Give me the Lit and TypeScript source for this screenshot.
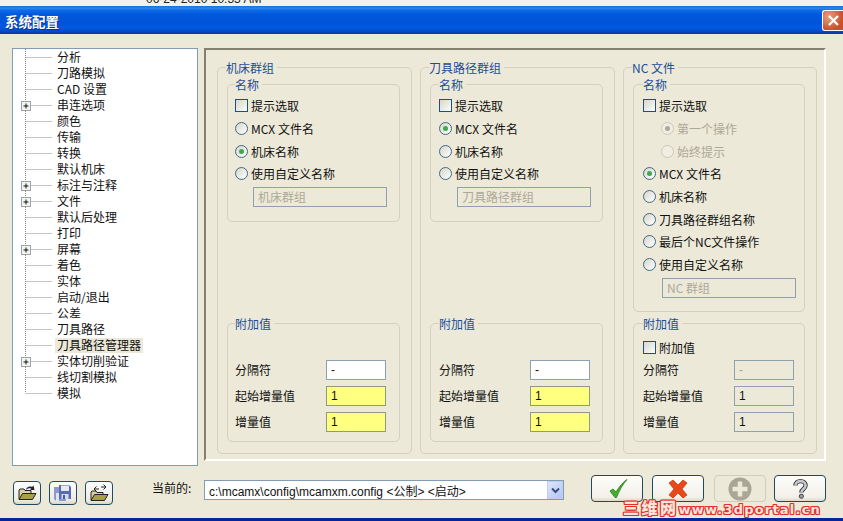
import { LitElement, html, css, svg } from "lit";
import { customElement } from "lit/decorators.js";

const tree: [string, boolean?][] = [
  ["分析"], ["刀路模拟"], ["CAD 设置"], ["串连选项", true], ["颜色"], ["传输"], ["转换"], ["默认机床"],
  ["标注与注释", true], ["文件", true], ["默认后处理"], ["打印"], ["屏幕", true], ["着色"], ["实体"],
  ["启动/退出"], ["公差"], ["刀具路径"], ["刀具路径管理器"], ["实体切削验证", true], ["线切割模拟"], ["模拟"],
];

const comboText = "c:\\mcamx\\config\\mcamxm.config <公制> <启动>";

@customElement("app-root")
export class AppRoot extends LitElement {
  static styles = css`
    :host { display: flex; flex-direction: column; position: relative; width: 843px; height: 521px; overflow: hidden; background: #ece9d8;
      font-family: "Noto Sans CJK SC", "Liberation Sans", sans-serif; font-size: 12px; color: #111; }
    .strip { height: 6px; flex: none; overflow: hidden; background: #f4f2e8; padding-left: 146px; font-family: "Liberation Sans", sans-serif; }
    .strip span { display: block; margin-top: -8px; line-height: 14px; color: #222; }
    .title { height: 28px; flex: none; display: flex; align-items: center; justify-content: space-between; padding: 1px 0 0 5px; box-sizing: border-box;
      background: linear-gradient(#1a6ee0 0, #2a84ee 8%, #0f6ae8 16%, #0058dc 30%, #0054d8 60%, #0058e4 76%, #0050cc 88%, #0a3fa8 96%, #0c3a98 100%);
      color: #fff; font-size: 13.5px; font-weight: 700; text-shadow: 1px 1px 0 #0a2f80; }
    .close { width: 21px; height: 21px; box-sizing: border-box; border: 1px solid #fff; border-right: 0; border-radius: 3px 0 0 3px; display: flex; align-items: center; justify-content: center;
      background: radial-gradient(circle at 30% 30%, #e8a080, #c8502c 70%); }
    .main { flex: none; height: 432px; box-sizing: border-box; display: flex; align-items: flex-start; padding: 14px 0 0 12px; }
    .tree { width: 186px; height: 418px; box-sizing: border-box; border: 1px solid #7f9db9; background: #fff; flex: none; }
    .node { display: flex; height: 16px; align-items: flex-start; }
    .node svg { flex: none; display: block; }
    .node span { margin-top: 1px; padding: 0 2px; line-height: 13px; height: 15px; }
    .node .sel { background: #ece9d8; }
    .panel { margin-left: 6px; width: 622px; height: 413px; box-sizing: border-box; border: 2px solid; border-color: #83806f #fff #fff #83806f;
      display: grid; grid-template-columns: 195px 195px 194px; column-gap: 8px; padding: 17px 0 5px 11px; }
    .group { border: 1px solid #d3d0bd; border-radius: 5px; padding: 0 11px 0 9px; display: flex; flex-direction: column; min-height: 0; }
    .legend { height: 16px; margin-top: -8px; line-height: 15px; background: #ece9d8; width: fit-content; padding-right: 3px; color: #1a4e98; flex: none; }
    .group > .legend { margin-left: -1px; }
    .inner { margin-top: 8px; border: 1px solid #d3d0bd; border-radius: 5px; padding: 0 0 0 7px; box-sizing: border-box; height: 138px; }
    .tall { height: 228px; }
    .g2 .inner, .g2 .extra { padding-left: 8px; }
    .g3 .inner, .g3 .extra { padding-left: 9px; }
    .rows { padding-top: 1.67px; }
    .row { height: 22.67px; display: flex; align-items: center; gap: 3px; white-space: nowrap; }
    .row.sub { padding-left: 18px; }
    .off { color: #aca899; }
    .check { width: 13px; height: 13px; box-sizing: border-box; border: 1px solid #1c5180; background: linear-gradient(135deg, #d8d8d0, #fbfbf9); flex: none; }
    .radio { width: 13px; height: 13px; box-sizing: border-box; border: 1px solid #3f6a8a; border-radius: 50%; background: linear-gradient(135deg, #d6d5cb, #fff); flex: none; display: flex; align-items: center; justify-content: center; }
    .radio.dim { border-color: #cac8bb; background: #f0eee2; }
    .radio i { width: 5px; height: 5px; border-radius: 50%; background: #3faa4a; }
    .radio.dim i { background: #aca899; }
    .box { box-sizing: border-box; height: 20px; border: 1px solid #8fa0ae; background: #fff; display: flex; align-items: center; padding-left: 4px; font-family: "Liberation Sans", sans-serif; }
    .box.cjk { font-family: "Noto Sans CJK SC", sans-serif; }
    .box.name { width: 134px; margin: 1.67px 0 0 18px; background: #ece9d8; color: #aca899; }
    .g3 .box.name { margin: 2px 0 0 19px; }
    .box.yellow { background: #ffff80; border-color: #8f9a80; }
    .box.flat { background: #ece9d8; }
    .box.faint { background: #ece9d8; color: #aca899; }
    .extra { margin-top: auto; margin-bottom: 11px; height: 119px; box-sizing: border-box; border: 1px solid #d3d0bd; border-radius: 5px; padding: 0 0 0 7px; display: flex; flex-direction: column; flex: none; }
    .slot { height: 22px; margin-top: 4px; display: flex; align-items: center; gap: 3px; flex: none; }
    .fields { margin-top: 2px; display: grid; grid-template-columns: 91px 60px; grid-auto-rows: 20px; row-gap: 6px; align-items: center; }
    .fields span { margin-top: -2px; }
    .foot { flex: 1; display: flex; align-items: flex-start; padding-top: 9px; }
    .mini { width: 28px; height: 24px; box-sizing: border-box; margin: 6px 8px 0 0; border: 1px solid #1f4a62; border-radius: 4px; background: linear-gradient(#fdfdfb, #ece9e0 85%, #d8d4c6); display: flex; align-items: center; justify-content: center; flex: none; }
    .foot .mini:first-child { margin-left: 13px; }
    .cur { margin: 4px 12px 0 31px; line-height: 18px; width: 40px; flex: none; white-space: nowrap; }
    .combo { width: 360px; height: 20px; box-sizing: border-box; margin-top: 5px; border: 1px solid #7f9db9; background: #fff; display: flex; align-items: center; justify-content: space-between; padding-left: 4px; font-family: "Liberation Sans", "Noto Sans CJK SC", sans-serif; flex: none; white-space: pre; }
    .arrow { width: 16px; height: 18px; box-sizing: border-box; border: 1px solid #c0cfe8; background: linear-gradient(135deg, #dde6fb, #b3c5f3); display: flex; align-items: center; justify-content: center; }
    .acts { display: flex; margin-left: 27px; }
    .btn { width: 52px; height: 27px; box-sizing: border-box; margin-right: 9px; border: 1px solid #1f4a62; border-radius: 4px; background: linear-gradient(#fdfdfb, #f2f0e8 85%, #dcd8ca); display: flex; align-items: center; justify-content: center; flex: none; }
    .btn.dis { border-color: #d0cdbb; background: #ece9d8; margin-left: 1px; margin-right: 8px; }
    .base { height: 3px; background: #06259a; flex: none; }
    .mark { position: absolute; left: 623px; top: 499px; font-family: "DejaVu Sans", "Noto Sans CJK SC", sans-serif; font-size: 13px; letter-spacing: 1.2px; font-weight: 700; line-height: 16px; color: #fde4dc; white-space: nowrap;
      text-shadow: 1px 0 0 #e0302a, -1px 0 0 #e0302a, 0 1px 0 #e0302a, 0 -1px 0 #e0302a, 1px 1px 0 #e0302a, -1px -1px 0 #e0302a, 1px -1px 0 #e0302a, -1px 1px 0 #e0302a; }
    .mark b { font-size: 16px; letter-spacing: 2.500px; font-family: "Noto Sans CJK SC", sans-serif; }
  `;

  private conn(plus: boolean, last: boolean) {
    return html`<svg width="42" height="16" viewBox="0 0 42 16">
      <path d="M12.5 ${last ? "0V8" : "0V16"}M12.5 8.5H39" stroke="#8a8a8a" stroke-dasharray="1 1" fill="none"/>
      ${plus ? svg`<rect x="8.5" y="4.5" width="9" height="9" fill="#f4f4ee" stroke="#98a4b0"/><path d="M10.5 9H15.5M13 6.5V11.5" stroke="#111"/>` : ""}
    </svg>`;
  }

  private radio(label: string, on = false, dim = false, sub = false) {
    return html`<div class="row ${sub ? "sub" : ""} ${dim ? "off" : ""}"><span class="radio ${dim ? "dim" : ""}">${on ? html`<i></i>` : ""}</span>${label}</div>`;
  }

  private extra(third: boolean) {
    return html`<div class="extra">
      <div class="legend">附加值</div>
      <div class="slot">${third ? html`<span class="check"></span>附加值` : ""}</div>
      <div class="fields">
        <span>分隔符</span><div class="box ${third ? "faint" : ""}">-</div>
        <span>起始增量值</span><div class="box ${third ? "flat" : "yellow"}">1</div>
        <span>增量值</span><div class="box ${third ? "flat" : "yellow"}">1</div>
      </div>
    </div>`;
  }

  private simple(cls: string, title: string, on: number, name: string) {
    return html`<div class="group ${cls}">
      <div class="legend">${title}</div>
      <div class="inner">
        <div class="legend">名称</div>
        <div class="rows">
          <div class="row"><span class="check"></span>提示选取</div>
          ${this.radio("MCX 文件名", on === 0)}
          ${this.radio("机床名称", on === 1)}
          ${this.radio("使用自定义名称")}
        </div>
        <div class="box cjk name">${name}</div>
      </div>
      ${this.extra(false)}
    </div>`;
  }

  private icons = {
    open: svg`<path d="M2 15V6l1-1h4l1 1.500h6V15z" fill="#d8d0a0" stroke="#222"/><path d="M2 15.500l3.500-6H19l-3.500 6z" fill="#a8a048" stroke="#222"/><path d="M9 5.500c1-3 4-3.500 6-2.500l1.500-1.500 1 4.500h-4.500l1.300-1.300c-1.500-.6-3.300-.5-4.800.8z" fill="#222"/>`,
    save: svg`<path d="M1 3h10l2 2v12H3l-2-2z" fill="#8c9ad0"/><path d="M6 1h10l2 2v12H6z" fill="#5a6cb0"/><rect x="8" y="1.500" width="8" height="5.500" fill="#e6e9f4"/><rect x="8.500" y="10" width="7" height="5" fill="#d5daea"/><rect x="10" y="11" width="2" height="4" fill="#4a5c98"/><path d="M3 9h3v8H3z" fill="#dfe3f0"/>`,
    merge: svg`<path d="M2 16V8l1-1h4l1 1.500h6V16z" fill="#d8d0a0" stroke="#222"/><path d="M2 16.500l3.500-6H19l-3.500 6z" fill="#a8a048" stroke="#222"/><path d="M5 5h5M7.500 2.500L5 5l2.500 2.500M12 3h5M14.500 .5L17 3l-2.500 2.500" fill="none" stroke="#222"/>`,
  };

  render() {
    return html`
      <div class="strip"><span>06-24-2010 10:35 AM</span></div>
      <div class="title">
        <span>系统配置</span>
        <div class="close"><svg width="13" height="13" viewBox="0 0 13 13"><path d="M2 2L11 11M11 2L2 11" stroke="#fff" stroke-width="2.200"/></svg></div>
      </div>
      <div class="main">
        <div class="tree">
          ${tree.map(([t, plus], i) => html`<div class="node">
            ${this.conn(!!plus, i === tree.length - 1)}
            <span class="${i === 18 ? "sel" : ""}">${t}</span>
          </div>`)}
        </div>
        <div class="panel">
          ${this.simple("g1", "机床群组", 1, "机床群组")}
          ${this.simple("g2", "刀具路径群组", 0, "刀具路径群组")}
          <div class="group g3">
            <div class="legend">NC 文件</div>
            <div class="inner tall">
              <div class="legend">名称</div>
              <div class="rows">
                <div class="row"><span class="check"></span>提示选取</div>
                ${this.radio("第一个操作", true, true, true)}
                ${this.radio("始终提示", false, true, true)}
                ${this.radio("MCX 文件名", true)}
                ${this.radio("机床名称")}
                ${this.radio("刀具路径群组名称")}
                ${this.radio("最后个NC文件操作")}
                ${this.radio("使用自定义名称")}
              </div>
              <div class="box cjk name">NC 群组</div>
            </div>
            ${this.extra(true)}
          </div>
        </div>
      </div>
      <div class="foot">
        <div class="mini"><svg width="20" height="18" viewBox="0 0 20 18">${this.icons.open}</svg></div>
        <div class="mini"><svg width="20" height="18" viewBox="0 0 20 18">${this.icons.save}</svg></div>
        <div class="mini"><svg width="20" height="18" viewBox="0 0 20 18">${this.icons.merge}</svg></div>
        <div class="cur">当前的:</div>
        <div class="combo"><span>${comboText}</span>
          <div class="arrow"><svg width="9" height="7" viewBox="0 0 9 7"><path d="M1 1.500L4.500 5 8 1.500" fill="none" stroke="#3a4f80" stroke-width="2"/></svg></div>
        </div>
        <div class="acts">
          <div class="btn"><svg width="22" height="22" viewBox="0 0 22 22"><path d="M4 13l3-2 3 3C13 9 17 4 21 1.500 17 6 13 13 10.500 19.500H9z" fill="#45b02c" stroke="#2a7a1c" stroke-width=".8"/></svg></div>
          <div class="btn"><svg width="22" height="22" viewBox="0 0 22 22"><path d="M2 5l4-3 5 5 5-5 4 3-5 6 5 6-4 3-5-5-5 5-4-3 5-6z" fill="#e8481a" stroke="#d03810" stroke-width=".8"/></svg></div>
          <div class="btn dis"><svg width="24" height="24" viewBox="0 0 24 24"><circle cx="12" cy="12" r="11.500" fill="#a9a697"/><path d="M12 4.500v15M4.500 12h15" stroke="#ece9d8" stroke-width="4.500"/></svg></div>
          <div class="btn"><svg width="17" height="22" viewBox="0 0 20 24"><path d="M4 8c0-7 12-7 12 0 0 4-5 4-5 8" fill="none" stroke="#333" stroke-width="5"/><path d="M4 8c0-7 12-7 12 0 0 4-5 4-5 8" fill="none" stroke="#c8c8d0" stroke-width="3"/><circle cx="11" cy="20.500" r="2.500" fill="#9a9aa2" stroke="#333"/></svg></div>
        </div>
      </div>
      <div class="base"></div>
      <div class="mark"><b>三维网</b>www.3dportal.cn</div>
    `;
  }
}
